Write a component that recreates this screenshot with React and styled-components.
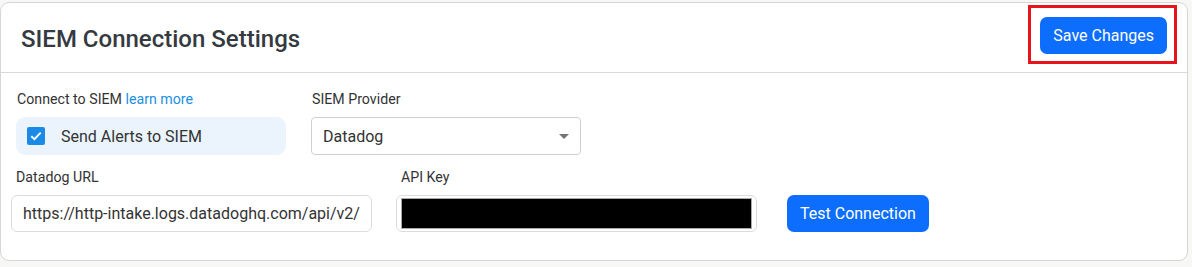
import styled, { createGlobalStyle } from 'styled-components';

const GlobalStyle = createGlobalStyle`
  body {
    margin: 0;
    background: #f7f7f5;
    font-family: Roboto, "Liberation Sans", sans-serif;
  }
`;

const App = () => {
  return (
    <>
      <GlobalStyle />
      <Card>
        <Header>
          <Title>SIEM Connection Settings</Title>
          <Highlight>
            <Button>Save Changes</Button>
          </Highlight>
        </Header>
        <Body>
          <Row>
            <Field $width={270}>
              <Label>
                Connect to SIEM <Link href="#">learn more</Link>
              </Label>
              <CheckRow>
                <CheckBox>
                  <svg width="12" height="10" viewBox="0 0 12 10">
                    <path
                      d="M1.3 5.2 L4.4 8.2 L10.7 1.6"
                      fill="none"
                      stroke="#fff"
                      strokeWidth="1.9"
                    />
                  </svg>
                </CheckBox>
                <CheckText>Send Alerts to SIEM</CheckText>
              </CheckRow>
            </Field>
            <Field $width={270}>
              <Label>SIEM Provider</Label>
              <Select>
                <span>Datadog</span>
                <Caret />
              </Select>
            </Field>
          </Row>
          <Row $shift>
            <Field $width={361}>
              <Label $indent>Datadog URL</Label>
              <Input>https://http-intake.logs.datadoghq.com/api/v2/</Input>
            </Field>
            <Field $width={361}>
              <Label $indent>API Key</Label>
              <Input $masked>
                <Redacted />
              </Input>
            </Field>
            <Button $small>Test Connection</Button>
          </Row>
        </Body>
      </Card>
    </>
  );
};

export default App;

const Card = styled.div`
  margin-top: 2px;
  width: 1186px;
  height: 257px;
  background: #fff;
  border: 1px solid #d6d6d6;
  border-radius: 9px;
  overflow: hidden;
`;

const Header = styled.div`
  height: 69px;
  display: flex;
  align-items: center;
  justify-content: space-between;
  padding: 0 10px 0 20px;
  border-bottom: 1px solid #d9d9d9;
`;

const Title = styled.h1`
  margin: 0;
  padding-top: 2px;
  font-size: 24px;
  font-weight: 500;
  color: #343a40;
`;

const Highlight = styled.div`
  display: flex;
  padding: 9px 7px 7px 9px;
  border: 3px solid #e8141c;
  margin-top: -7px;
`;

const Button = styled.button`
  height: 37px;
  padding: 0 13px;
  border: none;
  border-radius: 7px;
  background: #0d6efd;
  color: #fff;
  font-family: Roboto, "Liberation Sans", sans-serif;
  font-size: 16px;
  cursor: pointer;
  align-self: flex-end;
  margin-left: ${(p) => (p.$small ? '6px' : '0')};
`;

const Body = styled.div`
  padding: 17px 16px 0 14px;
  display: flex;
  flex-direction: column;
  gap: 13px;
`;

const Row = styled.div`
  display: flex;
  gap: 25px;
  align-items: flex-end;
  margin-left: ${(p) => (p.$shift ? '-4px' : '1px')};
  ${(p) => p.$shift && 'gap: 24px;'}
`;

const Field = styled.div`
  width: ${(p) => p.$width}px;
  display: flex;
  flex-direction: column;
  gap: 9px;
`;

const Label = styled.div`
  font-size: 14.2px;
  color: #333;
  line-height: 18px;
  padding-left: ${(p) => (p.$indent ? '5px' : '1px')};
`;

const Link = styled.a`
  color: #1a8fe3;
  text-decoration: none;
`;

const CheckRow = styled.div`
  height: 38px;
  display: flex;
  align-items: center;
  gap: 16px;
  padding-left: 11px;
  background: #ebf4fc;
  border-radius: 9px;
`;

const CheckBox = styled.span`
  width: 18px;
  height: 18px;
  border-radius: 2px;
  background: #1a8ae6;
  display: flex;
  align-items: center;
  justify-content: center;
`;

const CheckText = styled.span`
  font-size: 16px;
  color: #333;
`;

const Select = styled.div`
  height: 36px;
  display: flex;
  align-items: center;
  justify-content: space-between;
  padding: 0 11px;
  border: 1px solid #cfcfcf;
  border-radius: 4px;
  font-size: 16px;
  color: #333;
`;

const Caret = styled.span`
  width: 0;
  height: 0;
  border-left: 5px solid transparent;
  border-right: 5px solid transparent;
  border-top: 5px solid #757575;
`;

const Input = styled.div`
  height: 35px;
  display: flex;
  align-items: center;
  padding: ${(p) => (p.$masked ? '0 4px' : '0 11px')};
  border: 1px solid #dcdcdc;
  border-radius: 6px;
  font-size: 16px;
  color: #333;
  white-space: nowrap;
  overflow: hidden;
`;

const Redacted = styled.div`
  flex: 1;
  height: 31px;
  background: #000;
  border: 1px solid #aaa;
  box-sizing: border-box;
`;
